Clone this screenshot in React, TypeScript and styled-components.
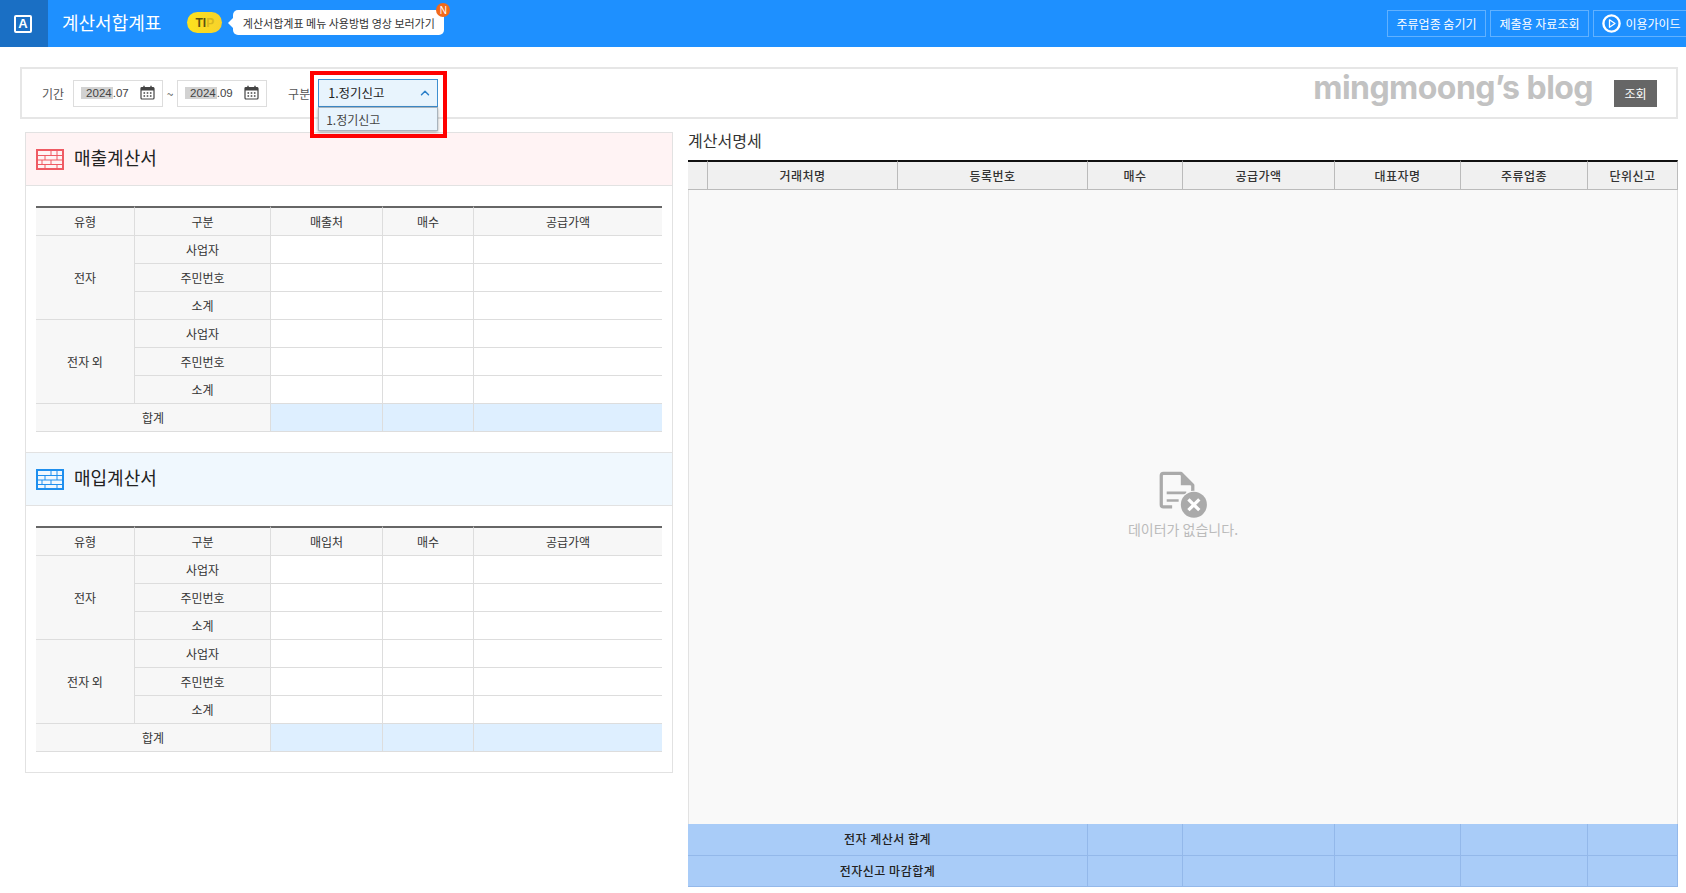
import React from 'react';
import styled, { createGlobalStyle } from 'styled-components';
import { ChevronUp } from 'lucide-react';

const GlobalStyle = createGlobalStyle`
  html, body {
    margin: 0;
    padding: 0;
    background: #fff;
  }
  body {
    width: 1686px;
    height: 893px;
    overflow: hidden;
    font-family: "Noto Sans CJK KR", "Noto Sans", sans-serif;
    font-size: 12px;
    color: #333;
  }
  * {
    box-sizing: border-box;
  }
`;

const TopBar = styled.header`
  display: flex;
  align-items: center;
  height: 47px;
  background: #1e90ff;
`;

const LogoBox = styled.div`
  display: flex;
  align-items: center;
  justify-content: center;
  width: 48px;
  height: 47px;
  padding-right: 2px;
  background: #1a6fc4;
`;

const LogoMark = styled.span`
  display: flex;
  align-items: center;
  justify-content: center;
  width: 18px;
  height: 18px;
  border: 2px solid #fff;
  border-radius: 2px;
  color: #fff;
  font-family: "Liberation Sans", sans-serif;
  font-size: 13px;
  font-weight: 700;
  line-height: 1;
`;

const PageTitle = styled.h1`
  margin: 0 0 0 14px;
  color: #fff;
  font-size: 18px;
  font-weight: 400;
  line-height: 44px;
  height: 47px;
  white-space: nowrap;
`;

const TipBadge = styled.span`
  display: flex;
  align-items: center;
  justify-content: center;
  width: 35px;
  height: 21px;
  margin: -2px 0 0 26px;
  border-radius: 11px;
  background: linear-gradient(90deg, #fde21d, #f7d22c);
  color: #5c5210;
  font-family: "Liberation Sans", sans-serif;
  font-size: 12px;
  font-weight: 700;

  i {
    color: #d9b820;
    font-style: normal;
  }
`;

const TipBubble = styled.a`
  position: relative;
  display: flex;
  align-items: center;
  justify-content: center;
  width: 211px;
  height: 25px;
  margin: -2px 0 0 11px;
  border-radius: 5px;
  background: #fff;
  color: #333;
  font-size: 11px;
  white-space: nowrap;

  &::before {
    content: '';
    position: absolute;
    top: 8px;
    left: -5px;
    border-top: 5px solid transparent;
    border-bottom: 5px solid transparent;
    border-right: 5px solid #fff;
  }
`;

const NewDot = styled.span`
  position: absolute;
  top: -7px;
  right: -6px;
  display: flex;
  align-items: center;
  justify-content: center;
  width: 14px;
  height: 14px;
  border-radius: 50%;
  background: #f26a1b;
  color: #fff;
  font-family: "Liberation Sans", sans-serif;
  font-size: 10px;
`;

const TopActions = styled.div`
  display: flex;
  gap: 4px;
  margin: -1px 0 0 auto;
`;

const TopButton = styled.button<{ $width: number; $icon?: boolean }>`
  display: flex;
  align-items: center;
  justify-content: center;
  gap: 4px;
  width: ${(p) => p.$width}px;
  height: 27px;
  padding: 0 0 0 ${(p) => (p.$icon ? 3 : 0)}px;
  border: 1px solid rgba(255, 255, 255, 0.3);
  border-right-width: ${(p) => (p.$icon ? 0 : 1)}px;
  background: transparent;
  color: #fff;
  font-family: inherit;
  font-size: 12px;
  white-space: nowrap;
`;

const Main = styled.main`
  padding: 20px 8px 0 20px;
`;

const SearchBar = styled.section`
  display: flex;
  align-items: center;
  height: 52px;
  padding: 0 19px 0 20px;
  border: 2px solid #e6e6e6;
`;

const FieldLabel = styled.label<{ $gap?: number }>`
  margin-left: ${(p) => p.$gap ?? 0}px;
  color: #555;
  font-size: 12px;
  white-space: nowrap;
`;

const DateBox = styled.div`
  display: flex;
  align-items: center;
  width: 90px;
  height: 27px;
  margin-left: 9px;
  padding: 0 7px 0 7px;
  border: 1px solid #ddd;
  background: #fff;
  color: #444;
  font-family: "Liberation Sans", sans-serif;
  font-size: 11.5px;

  svg {
    margin: 0 0 2px auto;
  }
`;

const SelectedYear = styled.span`
  padding: 0 1px 0 5px;
  background: #d2d2d2;
`;

const Tilde = styled.span`
  width: 14px;
  margin-right: -9px;
  color: #555;
  text-align: center;
`;

const SelectWrap = styled.div`
  position: relative;
  width: 120px;
  height: 28px;
  margin-left: 8px;
`;

const SelectBox = styled.div`
  display: flex;
  align-items: center;
  justify-content: space-between;
  height: 28px;
  padding: 0 5px 1px 9px;
  border: 1px solid #3f8fd0;
  background: #e8f4fd;
  color: #222;
  font-size: 12.5px;
`;

const SelectMenu = styled.div`
  position: absolute;
  top: 28px;
  left: 0;
  display: flex;
  align-items: center;
  width: 120px;
  height: 24px;
  padding-left: 7px;
  border: 1px solid #a9b4bd;
  background: #e8f4fd;
  box-shadow: 0 1px 3px rgba(0, 0, 0, 0.35);
  color: #444;
  font-size: 12px;
`;

const RedFrame = styled.div`
  position: absolute;
  top: -8px;
  left: -8px;
  width: 137px;
  height: 67px;
  border: 4px solid #f00;
  pointer-events: none;
`;

const BlogMark = styled.div`
  margin: 0 0 10px auto;
  color: #c2c2c2;
  font-family: Inter, "Liberation Sans", sans-serif;
  font-size: 32px;
  font-weight: 700;
  letter-spacing: -0.55px;
  line-height: 1;
  white-space: nowrap;
`;

const SearchButton = styled.button`
  width: 43px;
  height: 27px;
  margin-left: 21px;
  padding: 0;
  border: 0;
  background: #666;
  color: #fff;
  font-family: inherit;
  font-size: 12px;
`;

const Columns = styled.div`
  display: flex;
  gap: 15px;
  margin-top: 13px;
  padding-left: 5px;
`;

const LeftPanel = styled.section`
  width: 648px;
  height: 641px;
  border: 1px solid #e2e2e2;
`;

const SectionHead = styled.div<{ $tone: 'red' | 'blue'; $ruled?: boolean }>`
  display: flex;
  align-items: center;
  gap: 10px;
  height: ${(p) => (p.$ruled ? 54 : 53)}px;
  padding-left: 10px;
  border-top: ${(p) => (p.$ruled ? '1px solid #e2e2e2' : '0')};
  border-bottom: 1px solid #e2e2e2;
  background: ${(p) => (p.$tone === 'red' ? '#fff3f4' : '#f0f8fe')};
`;

const SectionTitle = styled.h2`
  margin: 0 0 4px;
  color: #222;
  font-size: 18px;
  font-weight: 400;
`;

const TableWrap = styled.div`
  padding: 20px 10px;
`;

const SumTable = styled.table`
  width: 626px;
  border-collapse: separate;
  border-spacing: 0;
  table-layout: fixed;

  th, td {
    height: 28px;
    padding: 0;
    border-bottom: 1px solid #ddd;
    border-right: 1px solid #ddd;
    font-size: 12px;
    font-weight: 400;
    color: #333;
    text-align: center;
  }

  th:last-child, td:last-child {
    border-right: 0;
  }

  thead th {
    height: 30px;
    border-top: 2px solid #666;
    background: #f7f7f7;
  }
`;

const SideCell = styled.th`
  && {
    background: #f7f7f7;
  }
`;

const TotalCell = styled.td`
  && {
    background: #deefff;
  }
`;

const RightPanel = styled.section`
  width: 990px;
`;

const DetailTitle = styled.h2`
  height: 28px;
  margin: 0;
  color: #333;
  font-size: 16px;
  font-weight: 400;
  line-height: 16px;
`;

const DetailTable = styled.table`
  width: 990px;
  border-collapse: separate;
  border-spacing: 0;
  table-layout: fixed;

  thead th {
    height: 30px;
    padding: 0;
    border-top: 2px solid #111;
    border-bottom: 1px solid #bbb;
    border-right: 1px solid #bbb;
    background: #f0f0f0;
    color: #333;
    font-size: 12px;
    font-weight: 500;
    letter-spacing: 0.5px;
  }

  tfoot td {
    height: 31px;
    padding: 0 0 2px;
    border-bottom: 1px solid #93b8ea;
    border-right: 1px solid #93b8ea;
    background: #a9ccf8;
    color: #222;
    font-size: 12px;
    font-weight: 500;
    letter-spacing: 0.5px;
    text-align: center;
  }

  tfoot tr:first-child td {
    height: 32px;
  }
`;

const EmptyCell = styled.td`
  height: 634px;
  padding: 0;
  border-left: 1px solid #e2e2e2;
  border-right: 1px solid #ddd;
  background: #f9f9f9;
  text-align: center;
`;

const EmptyState = styled.div`
  display: flex;
  flex-direction: column;
  align-items: center;
  padding-bottom: 4px;
  color: #bbb;
  font-size: 14px;
`;

const CalendarIcon = () => (
  <svg width="15" height="15" viewBox="0 0 15 15" fill="none">
    <rect x="1" y="2.5" width="13" height="11.5" rx="1" stroke="#444" strokeWidth="1.2" />
    <rect x="1" y="2.5" width="13" height="3" fill="#444" />
    <path d="M4 .8v3M11 .8v3" stroke="#444" strokeWidth="1.4" />
    <path
      d="M3.5 8h1.6M6.7 8h1.6M9.9 8h1.6M3.5 11h1.6M6.7 11h1.6M9.9 11h1.6"
      stroke="#444"
      strokeWidth="1.6"
    />
  </svg>
);

const BrickIcon = ({ color }: { color: string }) => (
  <svg width="28" height="21" viewBox="0 0 28 21" fill="none">
    <rect x="1" y="1" width="26" height="19" stroke={color} strokeWidth="2" />
    <path
      d="M1 6.5h26M1 11h26M1 15.5h26M15 1v5.5M21 1v5.5M9 6.5V11M21 6.5V11M15 11v4.5M6 11v4.5M9 15.5V20M21 15.5V20"
      stroke={color}
      strokeWidth="1"
    />
  </svg>
);

const PlayIcon = () => (
  <svg width="19" height="19" viewBox="0 0 19 19" fill="none">
    <circle cx="9.5" cy="9.5" r="8.1" stroke="#fff" strokeWidth="2.4" />
    <path d="M7.5 5.8 13 9.5 7.5 13.2Z" stroke="#fff" strokeWidth="1.3" strokeLinejoin="round" />
  </svg>
);

const NoDataIcon = () => (
  <svg width="50" height="48" viewBox="0 0 46 44" fill="none">
    <path
      d="M13 33H5a2 2 0 0 1-2-2V4a2 2 0 0 1 2-2h16l11 11v6"
      stroke="#aaa"
      strokeWidth="3"
      strokeLinejoin="round"
    />
    <path d="M21 2v11h11Z" fill="#aaa" />
    <path d="M8 20h18M8 27h11" stroke="#aaa" strokeWidth="2.4" />
    <circle cx="33" cy="31" r="13" fill="#f9f9f9" />
    <circle cx="33" cy="31" r="12" fill="#aaa" />
    <path d="m28 26 10 10M38 26 28 36" stroke="#fff" strokeWidth="3" />
  </svg>
);

const subRows = ['사업자', '주민번호', '소계'];

const SummaryTable = ({ party }: { party: string }) => (
  <SumTable>
    <colgroup>
      <col width="99" />
      <col width="136" />
      <col width="112" />
      <col width="91" />
      <col width="188" />
    </colgroup>
    <thead>
      <tr>
        <th>유형</th>
        <th>구분</th>
        <th>{party}</th>
        <th>매수</th>
        <th>공급가액</th>
      </tr>
    </thead>
    <tbody>
      {['전자', '전자 외'].map((type) =>
        subRows.map((sub, i) => (
          <tr key={type + sub}>
            {i === 0 && <SideCell rowSpan={3}>{type}</SideCell>}
            <SideCell>{sub}</SideCell>
            <td />
            <td />
            <td />
          </tr>
        ))
      )}
      <tr>
        <SideCell colSpan={2}>합계</SideCell>
        <TotalCell />
        <TotalCell />
        <TotalCell />
      </tr>
    </tbody>
  </SumTable>
);

const detailColumns = [
  { label: '', width: 20 },
  { label: '거래처명', width: 190 },
  { label: '등록번호', width: 190 },
  { label: '매수', width: 95 },
  { label: '공급가액', width: 152 },
  { label: '대표자명', width: 126 },
  { label: '주류업종', width: 127 },
  { label: '단위신고', width: 90 },
];

const footerRows = ['전자 계산서 합계', '전자신고 마감합계'];

export default function App() {
  return (
    <>
      <GlobalStyle />
      <TopBar>
        <LogoBox>
          <LogoMark>A</LogoMark>
        </LogoBox>
        <PageTitle>계산서합계표</PageTitle>
        <TipBadge>
          TI<i>P</i>
        </TipBadge>
        <TipBubble>
          계산서합계표 메뉴 사용방법 영상 보러가기
          <NewDot>N</NewDot>
        </TipBubble>
        <TopActions>
          <TopButton $width={99}>주류업종 숨기기</TopButton>
          <TopButton $width={99}>제출용 자료조회</TopButton>
          <TopButton $width={93} $icon>
            <PlayIcon />
            이용가이드
          </TopButton>
        </TopActions>
      </TopBar>
      <Main>
        <SearchBar>
          <FieldLabel>기간</FieldLabel>
          <DateBox>
            <SelectedYear>2024</SelectedYear>.07
            <CalendarIcon />
          </DateBox>
          <Tilde>~</Tilde>
          <DateBox>
            <SelectedYear>2024</SelectedYear>.09
            <CalendarIcon />
          </DateBox>
          <FieldLabel $gap={21}>구분</FieldLabel>
          <SelectWrap>
            <SelectBox>
              1.정기신고
              <ChevronUp size={14} color="#2b7fc8" strokeWidth={2.5} />
            </SelectBox>
            <SelectMenu>1.정기신고</SelectMenu>
            <RedFrame />
          </SelectWrap>
          <BlogMark>mingmoong’s blog</BlogMark>
          <SearchButton>조회</SearchButton>
        </SearchBar>
        <Columns>
          <LeftPanel>
            <SectionHead $tone="red">
              <BrickIcon color="#ef5a63" />
              <SectionTitle>매출계산서</SectionTitle>
            </SectionHead>
            <TableWrap>
              <SummaryTable party="매출처" />
            </TableWrap>
            <SectionHead $tone="blue" $ruled>
              <BrickIcon color="#1e8fee" />
              <SectionTitle>매입계산서</SectionTitle>
            </SectionHead>
            <TableWrap>
              <SummaryTable party="매입처" />
            </TableWrap>
          </LeftPanel>
          <RightPanel>
            <DetailTitle>계산서명세</DetailTitle>
            <DetailTable>
              <colgroup>
                {detailColumns.map((c) => (
                  <col key={c.width + c.label} width={c.width} />
                ))}
              </colgroup>
              <thead>
                <tr>
                  {detailColumns.map((c) => (
                    <th key={c.width + c.label}>{c.label}</th>
                  ))}
                </tr>
              </thead>
              <tbody>
                <tr>
                  <EmptyCell colSpan={8}>
                    <EmptyState>
                      <NoDataIcon />
                      데이터가 없습니다.
                    </EmptyState>
                  </EmptyCell>
                </tr>
              </tbody>
              <tfoot>
                {footerRows.map((label) => (
                  <tr key={label}>
                    <td colSpan={3}>{label}</td>
                    <td />
                    <td />
                    <td />
                    <td />
                    <td />
                  </tr>
                ))}
              </tfoot>
            </DetailTable>
          </RightPanel>
        </Columns>
      </Main>
    </>
  );
}
